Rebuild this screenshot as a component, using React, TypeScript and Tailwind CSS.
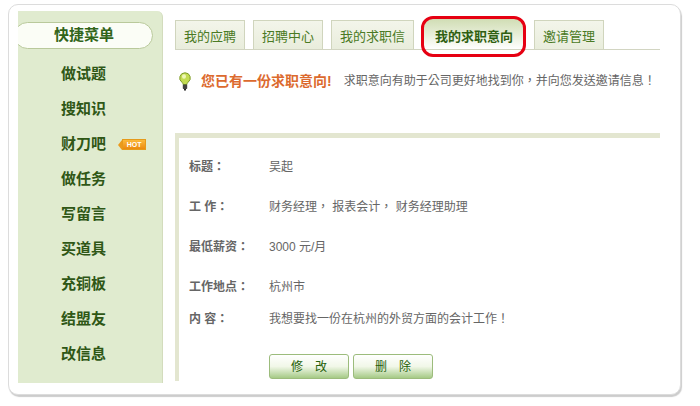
const menuItems = ["做试题", "搜知识", "财刀吧", "做任务", "写留言", "买道具", "充铜板", "结盟友", "改信息"];

const tabs = [
  { label: "我的应聘", width: "w-[70px]" },
  { label: "招聘中心", width: "w-[70px]" },
  { label: "我的求职信", width: "w-[83px]" },
];

const details = [
  { label: "标题：", value: "吴起", height: "h-[40px]" },
  { label: "工 作：", value: "财务经理， 报表会计， 财务经理助理", height: "h-[40px]" },
  { label: "最低薪资：", value: "3000 元/月", height: "h-[40px]" },
  { label: "工作地点：", value: "杭州市", height: "h-[40px]" },
  { label: "内 容：", value: "我想要找一份在杭州的外贸方面的会计工作！", height: "h-[24px]" },
];

function HotBadge() {
  return (
    <span className="ml-[12px] flex h-[11px] items-center">
      <span className="h-0 w-0 border-y-[5px] border-r-[4px] border-y-transparent border-r-[#eb9a1c]" />
      <span className="flex h-[11px] w-[24px] items-center justify-center border border-[#e59a1b] bg-gradient-to-b from-[#fbb93a] to-[#ec8a0c] text-[7px] font-bold leading-none text-white">
        HOT
      </span>
    </span>
  );
}

function Sidebar() {
  return (
    <aside className="h-[372px] w-[145px] shrink-0 overflow-hidden rounded-tr-[6px] border-r border-[#d3dcbd] bg-[#e0ebcf]">
      <div className="ml-[-4px] mt-[11px] flex h-[27px] w-[139px] items-center justify-center rounded-[14px] border border-[#b9c99b] bg-[#fbfdf6] pl-[1px] text-[15px] font-bold text-[#32651a]">
        快捷菜单
      </div>
      <ul className="mt-[8px]">
        {menuItems.map((item) => (
          <li key={item} className="flex h-[35px] items-center pl-[43px] text-[15px] font-bold text-[#2f5716]">
            <span>{item}</span>
            {item === "财刀吧" && <HotBadge />}
          </li>
        ))}
      </ul>
    </aside>
  );
}

function TabBar() {
  const tabClass =
    "flex h-[29px] items-center justify-center border border-b-0 border-[#d0d5bd] bg-gradient-to-b from-[#f3f5ea] to-[#e9eddc] pt-[4px] text-[13px] text-[#4a7a24]";
  return (
    <div className="flex h-[29px] w-[485px] items-end gap-[8px] border-b border-[#d2d5c2]">
      {tabs.map((tab) => (
        <div key={tab.label} className={`${tab.width} ${tabClass}`}>
          {tab.label}
        </div>
      ))}
      <div className="relative ml-[1px] flex h-[31px] w-[100px] items-center justify-center rounded-t-[8px] bg-gradient-to-b from-[#cfdcb2] via-[#e6edd6] to-white pl-[2px] pt-[7px] text-[13px] font-bold text-[#2f5f12]">
        我的求职意向
        <span className="absolute left-[-2px] top-[-2px] h-[41px] w-[105px] rounded-[12px] border-[3px] border-[#e60012]" />
      </div>
      <div className={`ml-[3px] w-[70px] ${tabClass}`}>邀请管理</div>
    </div>
  );
}

function Notice() {
  return (
    <div className="mt-[19px] flex h-[24px] items-center pl-[4px]">
      <svg width="12" height="19" viewBox="0 0 12 19" className="shrink-0">
        <path d="M6 .8a5.2 5.2 0 0 0-3 9.5c.8.6 1 1.4 1 2.2h4c0-.8.2-1.6 1-2.2A5.2 5.2 0 0 0 6 .8z" fill="#c3dc52" stroke="#7f9c2c" strokeWidth="1" />
        <ellipse cx="5" cy="4.5" rx="2" ry="2.2" fill="#eef7b8" />
        <rect x="3.8" y="12.6" width="4.4" height="4.4" rx="0.8" fill="#444" />
        <rect x="5" y="17" width="2" height="1.5" fill="#222" />
      </svg>
      <span className="ml-[10px] text-[14px] font-bold text-[#dc6a2e]">您已有一份求职意向!</span>
      <span className="ml-[12px] whitespace-nowrap font-['Liberation_Sans','Noto_Sans_CJK_TC',sans-serif] text-[12px] text-[#666]">
        求职意向有助于公司更好地找到你，并向您发送邀请信息！
      </span>
    </div>
  );
}

function DetailBox() {
  const btn =
    "flex h-[25px] w-[80px] items-center justify-center rounded-[3px] border border-[#9cbc7c] bg-gradient-to-b from-white via-[#f1f7e8] to-[#a6ca86] text-[12px] text-[#1f5f08]";
  return (
    <section className="mt-[40px] h-[248px] w-[485px] border-l-[4px] border-t-[5px] border-[#e3e6d0] pl-[10px] pt-[9px] font-['Liberation_Sans','Noto_Sans_CJK_TC',sans-serif] text-[12px] text-[#666]">
      {details.map((row) => (
        <div key={row.label} className={`flex items-center ${row.height}`}>
          <span className="w-[80px] font-bold">{row.label}</span>
          <span>{row.value}</span>
        </div>
      ))}
      <div className="ml-[80px] mt-[23px] flex gap-[4px]">
        <button className={btn}>修　改</button>
        <button className={btn}>删　除</button>
      </div>
    </section>
  );
}

export default function App() {
  return (
    <div className="h-[406px] w-[700px] bg-white pl-[8px] pt-[4px] font-['Liberation_Sans','Noto_Sans_CJK_SC',sans-serif]">
      <div className="flex h-[391px] w-[673px] rounded-[10px] border border-[#dcdcdc] bg-white pl-[9px] pt-[6px] shadow-[1px_2px_1px_#ccc]">
        <Sidebar />
        <main className="ml-[12px] pt-[10px]">
          <TabBar />
          <Notice />
          <DetailBox />
        </main>
      </div>
    </div>
  );
}
